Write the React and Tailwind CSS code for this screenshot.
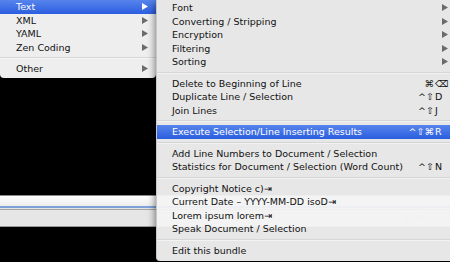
import React from 'react';

const leftItems = [
  { label: 'Text', sub: true, active: true },
  { label: 'XML', sub: true },
  { label: 'YAML', sub: true },
  { label: 'Zen Coding', sub: true },
  { sep: true },
  { label: 'Other', sub: true },
];

const subItems = [
  { label: 'Font', sub: true },
  { label: 'Converting / Stripping', sub: true },
  { label: 'Encryption', sub: true },
  { label: 'Filtering', sub: true },
  { label: 'Sorting', sub: true },
  { sep: true },
  { label: 'Delete to Beginning of Line', mods: '⌘', key: '⌫' },
  { label: 'Duplicate Line / Selection', mods: '^⇧', key: 'D' },
  { label: 'Join Lines', mods: '^⇧', key: 'J' },
  { sep: true },
  { label: 'Execute Selection/Line Inserting Results', mods: '^⇧⌘', key: 'R', active: true },
  { sep: true },
  { label: 'Add Line Numbers to Document / Selection' },
  { label: 'Statistics for Document / Selection (Word Count)', mods: '^⇧', key: 'N' },
  { sep: true },
  { label: 'Copyright Notice c)⇥' },
  { label: 'Current Date – YYYY-MM-DD isoD⇥' },
  { label: 'Lorem ipsum lorem⇥' },
  { label: 'Speak Document / Selection' },
  { sep: true },
  { label: 'Edit this bundle' },
];

const Arrow = ({ active }) => (
  <svg width="6" height="7" viewBox="0 0 6 7" className="shrink-0">
    <path d="M0 0 L6 3.5 L0 7 Z" fill={active ? '#ffffff' : '#6b6b6b'} />
  </svg>
);

const MenuRow = ({ item, pl, arrowRight }) => {
  if (item.sep) {
    return (
      <div className="h-[8px] flex flex-col justify-center">
        <div className="h-px bg-[#d6d6d6]" />
        <div className="h-px bg-[#fafafa]/60" />
      </div>
    );
  }
  return (
    <div
      className={`h-[13.5px] flex items-center ${pl} ${
        item.active ? 'bg-gradient-to-b from-[#5784ec] to-[#2b5de0] text-white' : 'text-[#111]'
      }`}
    >
      <span className="flex-1 whitespace-nowrap leading-none">{item.label}</span>
      {item.sub && (
        <span className={arrowRight}>
          <Arrow active={item.active} />
        </span>
      )}
      {item.key && (
        <span className="flex items-center leading-none">
          <span className="whitespace-nowrap">{item.mods}</span>
          <span className="w-[14px] pl-[1px]">{item.key}</span>
        </span>
      )}
    </div>
  );
};

export default function App() {
  return (
    <div
      className="relative w-[450px] h-[262px] overflow-hidden bg-black text-[9.5px]"
      style={{ fontFamily: '"DejaVu Sans", "Liberation Sans", sans-serif' }}
    >
      {/* window bar behind the menus */}
      <div className="h-[195px]" />
      <div className="h-px bg-[#8a8a8a]" />
      <div className="h-[10px] bg-gradient-to-b from-white to-[#eeeeee]" />
      <div className="h-[2px] bg-[#7fa1da]" />
      <div className="h-px bg-[#e4e4e4]" />
      <div className="h-px bg-[#a3a3a3]" />
      <div className="h-[16px] bg-[#e6e6e6] flex justify-end items-center pr-[28px] gap-[4px]">
        <div className="w-[7px] h-[6px] bg-[#d4d4d4]" />
        <div className="w-[7px] h-[6px] bg-[#d4d4d4]" />
      </div>
      <div className="h-px bg-[#9a9a9a]" />

      {/* left menu */}
      <div className="absolute left-0 top-0 w-[156px] pb-[2.5px] bg-[#eeeeee] rounded-b-[4px] shadow-[0_2px_6px_rgba(0,0,0,0.5)]">
        {leftItems.map((item, i) => (
          <MenuRow key={i} item={item} pl="pl-[16px]" arrowRight="pr-[8px]" />
        ))}
      </div>

      {/* submenu */}
      <div className="absolute left-[156px] top-0 w-[300px] pt-px pb-[4px] bg-[#f3f3f3]/95 border-l border-[#c8c8c8] rounded-b-[4px] shadow-[0_2px_8px_rgba(0,0,0,0.6)]">
        {subItems.map((item, i) => (
          <MenuRow key={i} item={item} pl="pl-[15px] pr-[8px]" arrowRight="pr-[0px]" />
        ))}
      </div>
    </div>
  );
}
